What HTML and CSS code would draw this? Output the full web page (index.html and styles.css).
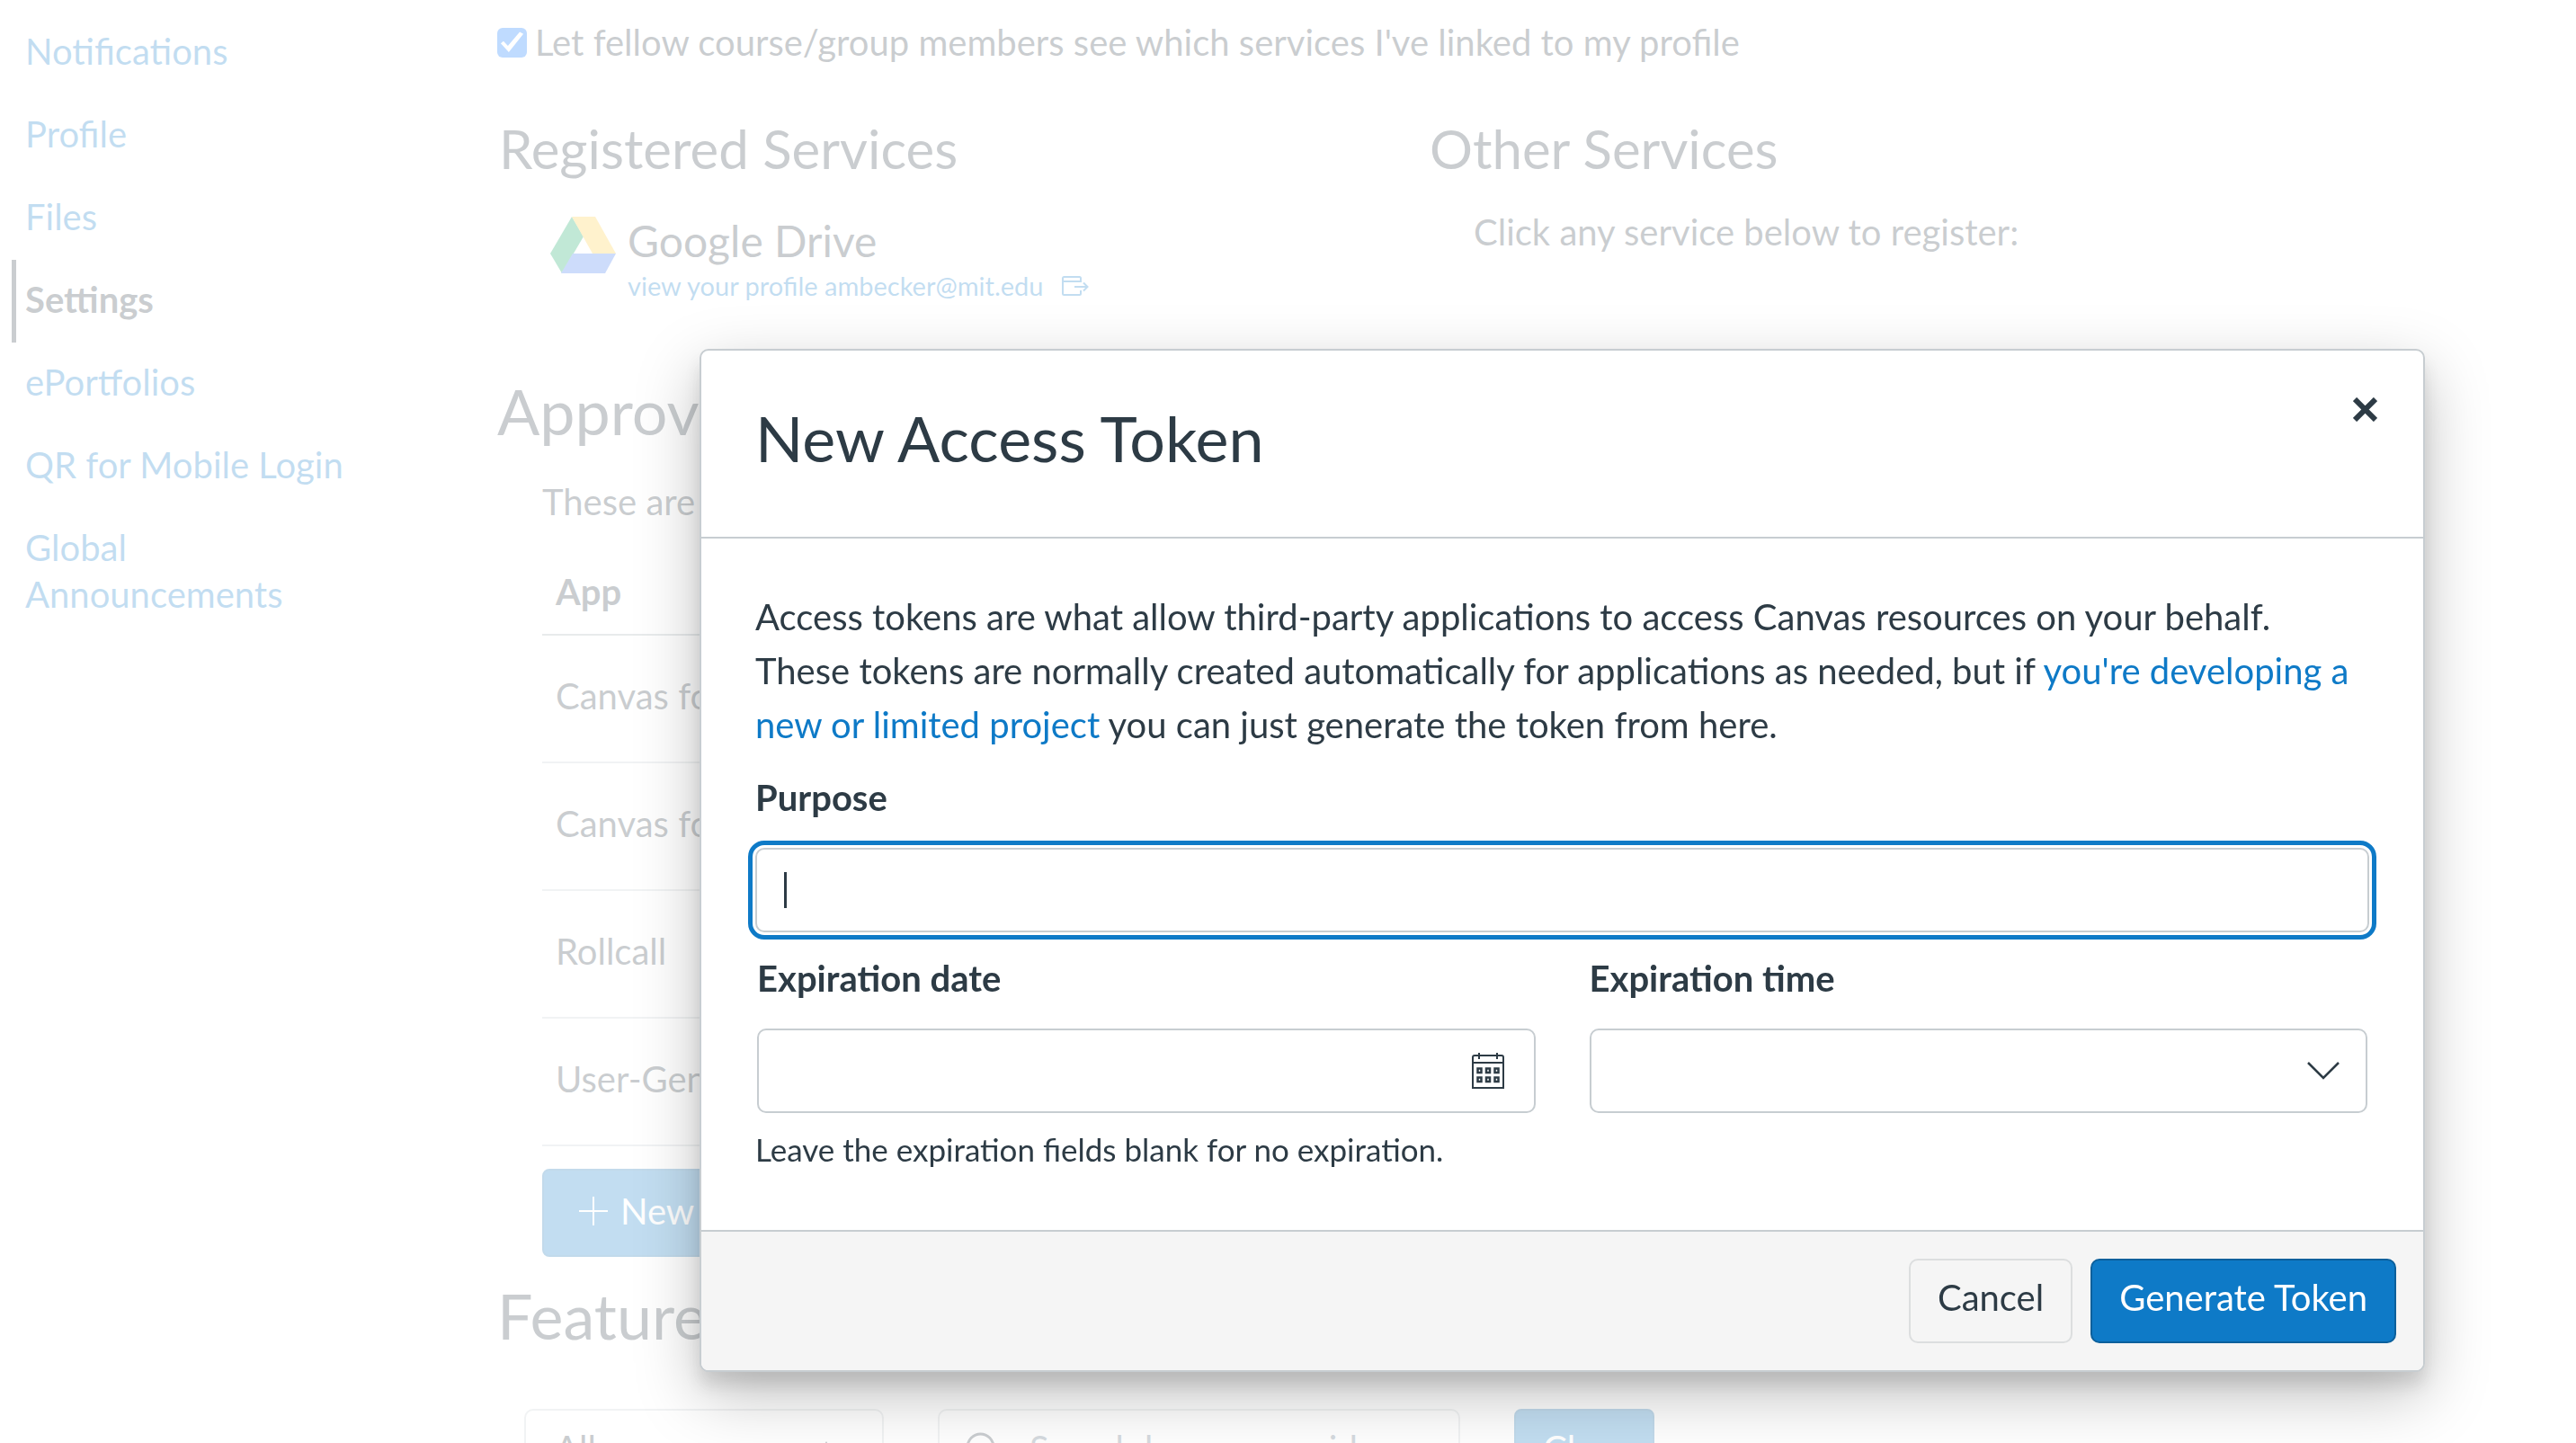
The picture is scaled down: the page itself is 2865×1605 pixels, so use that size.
FILE: index.html
```html
<!DOCTYPE html>
<html lang="en">
<head>
<meta charset="utf-8">
<title>User Settings</title>
<link rel="stylesheet" href="styles.css">
</head>
<body>
<div class="app">
  <nav class="sidebar" aria-label="Account">
    <ul class="nav-list">
      <li><a class="nav-link" href="#">Notifications</a></li>
      <li><a class="nav-link" href="#">Profile</a></li>
      <li><a class="nav-link" href="#">Files</a></li>
      <li><a class="nav-link active" href="#" aria-current="page">Settings</a></li>
      <li><a class="nav-link" href="#">ePortfolios</a></li>
      <li><a class="nav-link" href="#">QR for Mobile Login</a></li>
      <li><a class="nav-link" href="#">Global Announcements</a></li>
    </ul>
  </nav>

  <main class="content">
    <div class="check-row">
      <input class="checkbox" type="checkbox" id="show-services" checked>
      <label for="show-services">Let fellow course/group members see which services I've linked to my profile</label>
    </div>

    <div class="services">
      <section>
        <h2 class="subheading">Registered Services</h2>
        <div class="service">
          <svg class="drive-icon" viewBox="0 0 73 63" aria-hidden="true">
            <path fill="#0ba55e" d="M24 0 37 22 13 63 0 41z"/>
            <path fill="#fdc93b" d="M24 0H50L73 41H47z"/>
            <path fill="#3b76ee" d="M25 41H73L61 63H12z"/>
          </svg>
          <div>
            <h3 class="service-name">Google Drive</h3>
            <a class="service-link" href="#">view your profile ambecker@mit.edu
              <svg class="external-icon" viewBox="0 0 30 22" aria-hidden="true">
                <path fill="none" stroke="currentColor" stroke-width="2" d="M21 7V2.500Q21 1 19.500 1H2.500Q1 1 1 2.500V19.500Q1 21 2.500 21H19.500Q21 21 21 19.500V16M1 6H21M14 12H28M24 7.500 28.500 12 24 16.500"/>
              </svg>
            </a>
          </div>
        </div>
      </section>
      <section>
        <h2 class="subheading">Other Services</h2>
        <p class="service-hint">Click any service below to register:</p>
      </section>
    </div>

    <h1 class="heading">Approved Integrations</h1>
    <div class="integrations">
      <p class="intro">These are the third-party apps you have authorized.</p>
      <table class="apps">
        <thead><tr><th scope="col">App</th></tr></thead>
        <tbody>
          <tr><td>Canvas for Android</td></tr>
          <tr><td>Canvas for iOS</td></tr>
          <tr><td>Rollcall</td></tr>
          <tr><td>User-Generated</td></tr>
        </tbody>
      </table>
      <button class="new-token" type="button">
        <svg class="plus-icon" viewBox="0 0 32 32" aria-hidden="true"><path stroke="currentColor" stroke-width="2" d="M16 0V32M0 16H32"/></svg>
        New Access Token
      </button>
    </div>

    <h1 class="heading">Feature Options</h1>
    <div class="filters">
      <div class="filter-select">
        <select class="filter-field" aria-label="Filter features"><option>All</option></select>
        <svg class="filter-arrows" viewBox="0 0 20 30" aria-hidden="true"><path d="M10 0 17 11H3zM10 30 17 19H3z" fill="currentColor"/></svg>
      </div>
      <div class="filter-search">
        <svg class="search-icon" viewBox="0 0 40 40" aria-hidden="true"><path fill="none" stroke="currentColor" stroke-width="3" d="M31 16.500A14.500 14.500 0 1 1 2 16.500A14.500 14.500 0 1 1 31 16.500M27 27 39 39"/></svg>
        <input class="filter-field" type="search" aria-label="Search features" placeholder="Search by name or id">
      </div>
      <button class="clear" type="button">Clear</button>
    </div>
  </main>
</div>

<div class="overlay">
  <form class="modal" role="dialog" aria-labelledby="modal-title">
    <header class="modal-header">
      <h2 class="modal-title" id="modal-title">New Access Token</h2>
      <button class="close" type="button" aria-label="Close">
        <svg class="close-icon" viewBox="0 0 27 27" aria-hidden="true"><path stroke="currentColor" stroke-width="6" d="M2 2 25 25M25 2 2 25"/></svg>
      </button>
    </header>

    <div class="modal-body">
      <p class="description">Access tokens are what allow third-party applications to access Canvas resources on your behalf. These tokens are normally created automatically for applications as needed, but if <a href="#">you're developing a new or limited project</a> you can just generate the token from here.</p>

      <label class="label" for="purpose">Purpose</label>
      <div class="control purpose">
        <input class="field" id="purpose" type="text">
        <span class="caret"></span>
      </div>

      <div class="expiry">
        <div>
          <label class="label" for="expires-date">Expiration date</label>
          <div class="control">
            <input class="field" id="expires-date" type="text">
            <button class="field-icon" type="button" aria-label="Open calendar">
              <svg class="calendar-icon" viewBox="0 0 36 40" aria-hidden="true">
                <path fill="none" stroke="currentColor" stroke-width="2" d="M1 39V5Q1 3 3 3H33Q35 3 35 5V39ZM1 11H35M8 0V7M28 0V7"/>
                <path fill="none" stroke="currentColor" stroke-width="2.500" d="M6.500 17.500h4v4.500h-4zM16 17.500h4v4.500h-4zM25.500 17.500h4v4.500h-4zM6.500 27.500h4v4.500h-4zM16 27.500h4v4.500h-4zM25.500 27.500h4v4.500h-4z"/>
              </svg>
            </button>
          </div>
        </div>
        <div>
          <label class="label" for="expires-time">Expiration time</label>
          <div class="control">
            <select class="field" id="expires-time"><option></option></select>
            <span class="field-icon chevron">
              <svg class="chevron-icon" viewBox="0 0 36 20" aria-hidden="true"><path fill="none" stroke="currentColor" stroke-width="2.500" d="M1 1 18 18 35 1"/></svg>
            </span>
          </div>
        </div>
      </div>
      <p class="hint">Leave the expiration fields blank for no expiration.</p>
    </div>

    <footer class="modal-footer">
      <button class="button" type="button">Cancel</button>
      <button class="button primary" type="submit">Generate Token</button>
    </footer>
  </form>
</div>
</body>
</html>
```

FILE: styles.css
```css
:root {
  --ink: #2d3b45;
  --blue: #0e7ac7;
  --line: #c7cdd1;
}

* {
  box-sizing: border-box;
}

body {
  margin: 0;
  background: #fff;
  color: var(--ink);
  font: 40px/52px Lato, "Liberation Sans", sans-serif;
}

h1, h2, h3, p, ul {
  margin: 0;
  padding: 0;
  font-weight: 400;
}

a {
  color: var(--blue);
  text-decoration: none;
}

button, input, select {
  margin: 0;
  color: inherit;
  font: inherit;
}

svg {
  display: block;
  flex: none;
}

/* Page behind the dialog */

.app {
  display: flex;
  height: 100vh;
  overflow: hidden;
}

.sidebar {
  flex: none;
  width: 400px;
  margin-right: 153px;
  padding: 13px 0 0 13px;
}

.nav-list {
  list-style: none;
}

.nav-link {
  display: block;
  padding: 18px 0 22px 10px;
  border-left: 5px solid transparent;
}

.nav-link.active {
  border-color: var(--ink);
  color: var(--ink);
  font-weight: 700;
}

.content {
  flex: 1;
  min-width: 0;
  padding: 21px 242px 0 0;
}

.check-row {
  display: flex;
  align-items: center;
  gap: 9px;
}

.checkbox {
  appearance: none;
  width: 33px;
  height: 33px;
  border-radius: 6px;
  background: #0070ff;
}

.checkbox::after {
  content: "";
  display: block;
  width: 33px;
  height: 33px;
  background: #fff;
  clip-path: polygon(12% 54%, 21% 46%, 36% 62%, 76% 15%, 88% 22%, 39% 83%);
}

.services {
  display: grid;
  grid-template-columns: 1fr 1fr;
  padding: 56px 0 77px;
}

.subheading {
  padding-left: 2px;
  font-size: 60px;
  line-height: 72px;
}

.service {
  display: flex;
  gap: 13px;
  padding: 37px 0 0 59px;
}

.drive-icon {
  width: 73px;
  height: 63px;
  margin-top: 3px;
}

.service-name {
  font-size: 48px;
  line-height: 60px;
}

.service-link {
  display: flex;
  align-items: center;
  gap: 20px;
  font-size: 29px;
  line-height: 40px;
}

.external-icon {
  width: 30px;
  height: 22px;
}

.service-hint {
  padding: 31px 0 0 51px;
}

.heading {
  font-size: 70px;
  line-height: 84px;
}

.integrations {
  padding: 33px 0 23px 50px;
}

.apps {
  width: 100%;
  margin: 24px 0 25px;
  border-collapse: collapse;
  text-align: left;
}

.apps th {
  padding: 24px 15px 21px;
  border-bottom: 2px solid #a4b0b4;
}

.apps td {
  padding: 41px 15px 47px;
  border-bottom: 2px solid #c7cdd1;
}

.new-token,
.clear {
  border: 2px solid #0c6cb0;
  border-radius: 8px;
  background: var(--blue);
  color: #fff;
}

.new-token {
  display: flex;
  align-items: center;
  gap: 14px;
  height: 98px;
  padding: 0 39px 4px;
}

.plus-icon {
  width: 32px;
  height: 32px;
}

.filters {
  display: flex;
  gap: 60px;
  padding: 62px 0 0 30px;
}

.filter-select,
.filter-search {
  position: relative;
}

.filter-select {
  width: 400px;
}

.filter-search {
  width: 581px;
}

.filter-field {
  appearance: none;
  display: block;
  width: 100%;
  height: 94px;
  padding: 0 32px 6px;
  border: 2px solid var(--line);
  border-radius: 10px;
  background: #fff;
}

.filter-search .filter-field {
  padding-left: 100px;
}

.filter-field::placeholder {
  color: #5a6f80;
  opacity: 1;
}

.filter-arrows {
  position: absolute;
  top: 36px;
  right: 54px;
  width: 20px;
  height: 30px;
}

.search-icon {
  position: absolute;
  top: 26px;
  left: 31px;
  width: 40px;
  height: 40px;
}

.clear {
  height: 94px;
  padding: 0 30px 6px;
}

/* Dialog */

.overlay {
  position: fixed;
  inset: 0;
  padding: 388px 168px 0 778px;
  background: rgba(255, 255, 255, 0.75);
}

.modal {
  overflow: hidden;
  border: 2px solid var(--line);
  border-radius: 10px;
  background: #fff;
  box-shadow: 0 15px 18px rgba(0, 0, 0, 0.1), 0 25px 70px rgba(0, 0, 0, 0.25);
}

.modal-header {
  display: flex;
  justify-content: space-between;
  align-items: flex-start;
  padding: 55px 51px 68px 60px;
  border-bottom: 2px solid var(--line);
}

.modal-title {
  font-size: 70px;
  line-height: 84px;
}

.close {
  margin-top: -3px;
  padding: 0;
  border: 0;
  background: none;
}

.close-icon {
  width: 27px;
  height: 27px;
}

.modal-body {
  padding: 57px 60px 64px;
}

.description {
  line-height: 60px;
}

.label {
  display: block;
  font-weight: 700;
}

.description + .label {
  margin-top: 25px;
}

.control {
  position: relative;
  margin-top: 30px;
}

.field {
  appearance: none;
  display: block;
  width: 100%;
  height: 94px;
  padding: 0 30px;
  border: 2px solid var(--line);
  border-radius: 10px;
  background: #fff;
}

.purpose .field {
  outline: 5px solid var(--blue);
  outline-offset: 3px;
}

.caret {
  position: absolute;
  top: 27px;
  left: 32px;
  width: 3px;
  height: 40px;
  background: var(--ink);
}

.expiry {
  display: grid;
  grid-template-columns: 1fr 1fr;
  gap: 60px;
  padding: 25px 2px 0;
}

.field-icon {
  position: absolute;
  top: 0;
  right: 35px;
  display: flex;
  align-items: center;
  height: 94px;
  padding: 0;
  border: 0;
  background: none;
}

.chevron {
  right: 31px;
  pointer-events: none;
}

.calendar-icon {
  width: 36px;
  height: 40px;
}

.chevron-icon {
  width: 36px;
  height: 20px;
}

.hint {
  padding-top: 14px;
  font-size: 35px;
}

.modal-footer {
  display: flex;
  justify-content: flex-end;
  gap: 20px;
  padding: 30px;
  border-top: 2px solid var(--line);
  background: #f5f5f5;
}

.button {
  height: 94px;
  padding: 0 30px 8px;
  border: 2px solid #dcdedf;
  border-radius: 10px;
  background: #f5f5f5;
}

.button.primary {
  border-color: #0c609c;
  background: var(--blue);
  color: #fff;
}
```
